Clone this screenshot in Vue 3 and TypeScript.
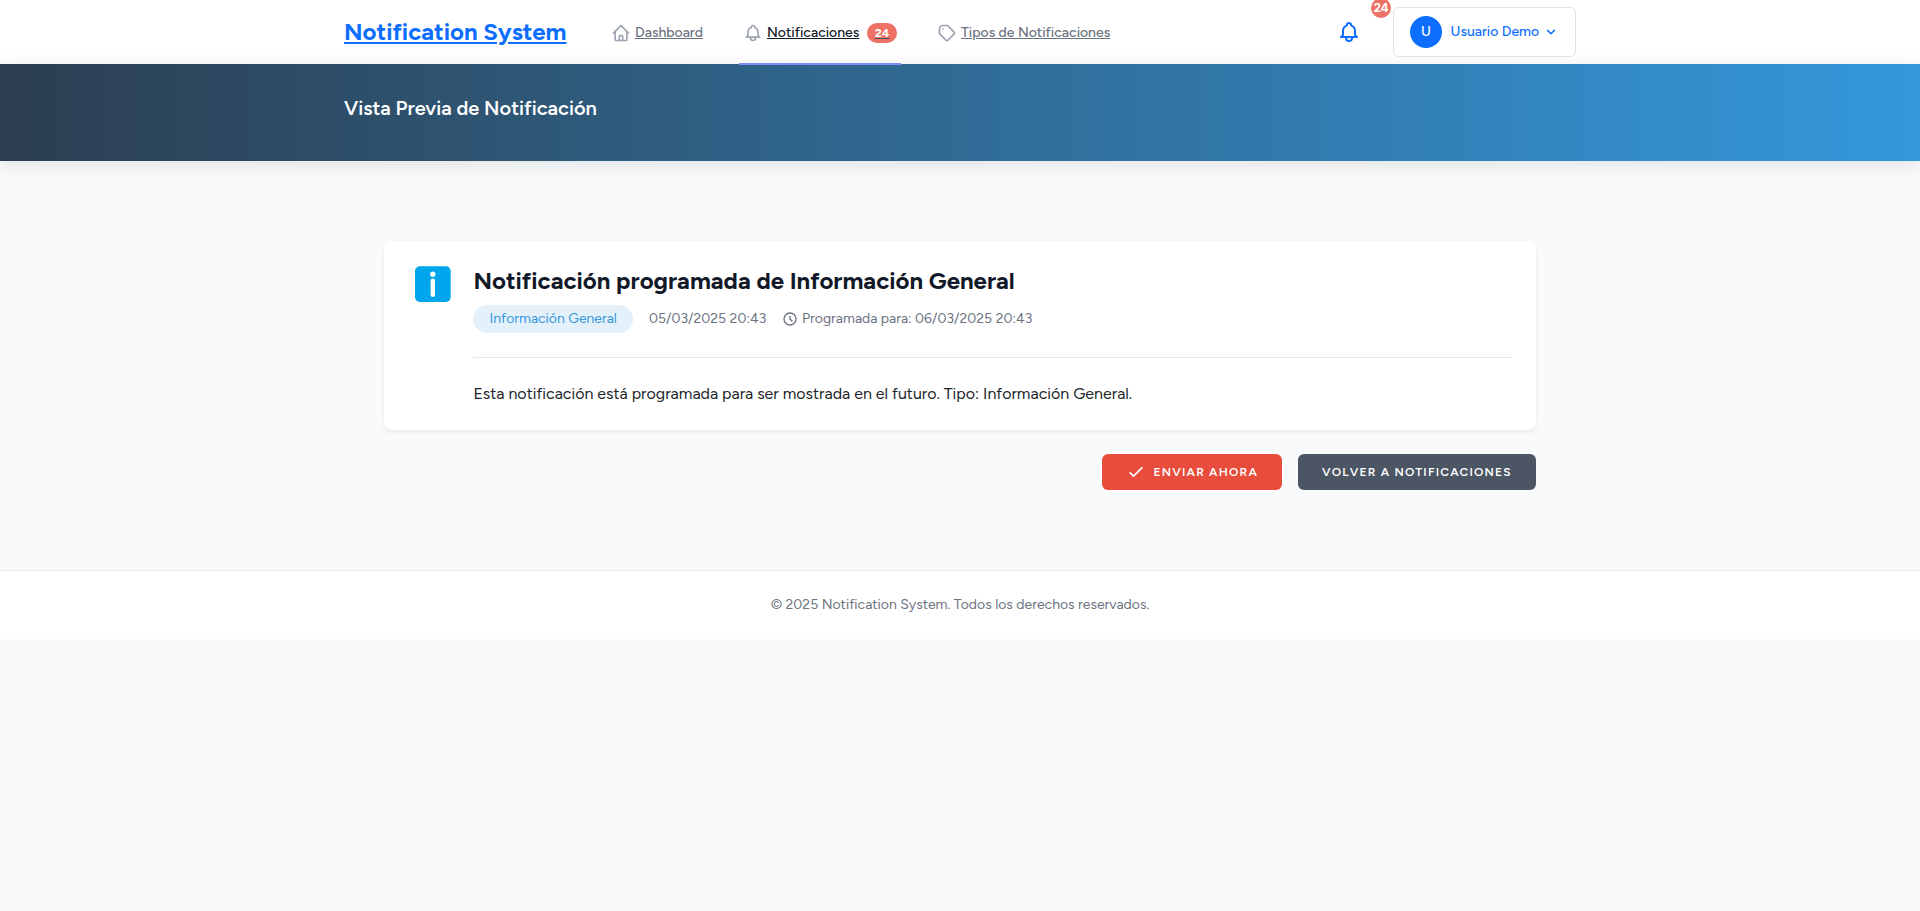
<script setup lang="ts">
interface NavItem { label: string; icon: string; active: boolean; badge: number; cls: string }

const unread = 24
const navItems: NavItem[] = [
  { label: 'Dashboard', cls: 'w-dash', active: false, badge: 0, icon: 'M3 12l2-2m0 0l7-7 7 7M5 10v10a1 1 0 001 1h3m10-11l2 2m-2-2v10a1 1 0 01-1 1h-3m-6 0a1 1 0 001-1v-4a1 1 0 011-1h2a1 1 0 011 1v4a1 1 0 001 1m-6 0h6' },
  { label: 'Notificaciones', cls: 'w-notif', active: true, badge: unread, icon: 'M15 17h5l-1.405-1.405A2.032 2.032 0 0118 14.158V11a6.002 6.002 0 00-4-5.659V5a2 2 0 10-4 0v.341C7.67 6.165 6 8.388 6 11v3.159c0 .538-.214 1.055-.595 1.436L4 17h5m6 0v1a3 3 0 11-6 0v-1m6 0H9' },
  { label: 'Tipos de Notificaciones', cls: 'w-tipos', active: false, badge: 0, icon: 'M7 7h.01M7 3h5c.512 0 1.024.195 1.414.586l7 7a2 2 0 010 2.828l-7 7a2 2 0 01-2.828 0l-7-7A1.994 1.994 0 013 12V7a4 4 0 014-4z' },
]
</script>

<template>
  <div class="page">
    <nav class="navbar">
      <div class="container nav-inner">
        <a class="brand"><span>Notification System</span></a>
        <div class="links">
          <a v-for="item in navItems" :key="item.label" class="link" :class="[item.cls, { active: item.active }]">
            <svg class="link-icon" viewBox="0 0 24 24"><path :d="item.icon" /></svg>
            <span class="link-text">{{ item.label }}</span>
            <span v-if="item.badge" class="pill"><span class="pill-count">{{ item.badge }}</span></span>
          </a>
        </div>
        <div class="right">
          <a class="bell">
            <svg viewBox="0 0 24 24"><path :d="navItems[1].icon" /></svg>
            <span class="bell-badge">{{ unread }}</span>
          </a>
          <button class="user">
            <span class="avatar">U</span>
            <span class="user-name">Usuario Demo</span>
            <svg class="chevron" viewBox="0 0 12 12"><path d="M2.6 4.4L6 7.7L9.4 4.4" /></svg>
          </button>
        </div>
      </div>
    </nav>

    <header class="hero">
      <div class="container"><h2><span>Vista Previa de Notificación</span></h2></div>
    </header>

    <main class="content">
      <article class="card">
        <svg class="info" viewBox="0 0 36 36">
          <rect y="0.3" width="35.7" height="35.7" rx="4.8" fill="#00a6ed" />
          <circle cx="17.8" cy="8.2" r="2.6" fill="#fff" />
          <rect x="15.6" y="12.6" width="4.4" height="18.4" rx="2.2" fill="#fff" />
        </svg>
        <div class="card-body">
          <h1><span>Notificación programada de Información General</span></h1>
          <div class="meta">
            <span class="tag">Información General</span>
            <span class="date">05/03/2025 20:43</span>
            <span class="scheduled">
              <svg viewBox="0 0 24 24"><path d="M12 8v4l3 3m6-3a9 9 0 11-18 0 9 9 0 0118 0z" /></svg>
              <span>Programada para: 06/03/2025 20:43</span>
            </span>
          </div>
          <p class="message"><span>Esta notificación está programada para ser mostrada en el futuro. Tipo: Información General.</span></p>
        </div>
      </article>
      <div class="actions">
        <button class="btn send">
          <svg viewBox="0 0 24 24"><path d="M5 13l4 4L19 7" /></svg>
          <span>ENVIAR AHORA</span>
        </button>
        <button class="btn back"><span>VOLVER A NOTIFICACIONES</span></button>
      </div>
    </main>

    <footer class="footer"><span>© 2025 Notification System. Todos los derechos reservados.</span></footer>
  </div>
</template>

<style>
body { margin: 0; background: #f9fafc; }
</style>

<style scoped>
.page { min-height: 911px; background: #f9fafc; font-family: Figtree, Lato, "Noto Sans", sans-serif; color: #212529; font-size: 14px; line-height: 20px; }
.page * { box-sizing: border-box; }
svg { display: block; flex: none; fill: none; stroke: currentColor; stroke-width: 2; stroke-linecap: round; stroke-linejoin: round; }
span { white-space: nowrap; }
.container { width: 1232px; margin: 0 auto; }
.navbar { height: 64px; background: #fff; }
.nav-inner { height: 64px; display: flex; align-items: center; }
.brand { width: 223px; font-size: 24px; font-weight: 700; line-height: 32px; color: #0d6efd; text-decoration: underline; }
.links { position: relative; z-index: 1; display: flex; gap: 32px; margin-left: 40px; height: 65px; align-self: flex-start; }
.link { display: flex; align-items: center; padding: 2px 4px 0; border-bottom: 2px solid transparent; color: #6b7280; text-decoration: underline; }
.link-icon { width: 20px; height: 20px; margin-right: 4px; color: #9ca3af; }
.link.active { color: #111827; border-bottom-color: #818cf8; }
.w-dash { width: 100px; }
.w-notif { width: 162px; }
.w-tipos { width: 182px; }
.link-text { font-weight: 500; }
.pill { margin-left: auto; width: 30px; height: 20px; border-radius: 10px; background: #ed7164; font-size: 12px; font-weight: 700; text-align: center; text-decoration: underline; text-decoration-color: #4b5563; }
.pill-count { color: #fff; }
.right { margin-left: auto; display: flex; align-items: center; }
.bell { position: relative; width: 24px; height: 24px; margin-right: 32px; color: #0d6efd; }
.bell svg { width: 24px; height: 24px; }
.bell-badge { position: absolute; left: 34px; top: -22px; width: 20px; height: 20px; border-radius: 50%; background: #ed7164; color: #fff; font-family: Inter, sans-serif; font-size: 12px; font-weight: 700; text-align: center; letter-spacing: -0.3px; }
.user { display: flex; align-items: center; width: 183px; height: 50px; padding: 0 16px; border: 1px solid #dee2e6; border-radius: 6px; background: #fff; color: #0d6efd; font: 500 14px/20px Figtree, Lato, sans-serif; }
.avatar { width: 32px; height: 32px; border-radius: 50%; background: #0d6efd; color: #fff; line-height: 32px; margin-right: 8.5px; text-align: center; }
.user-name { width: 89.5px; text-align: left; }
.chevron { width: 12px; height: 12px; margin-left: 5px; stroke-width: 1.5; }
.hero { height: 97px; padding-top: 30px; background: linear-gradient(90deg, #2c3e50, #3498db); box-shadow: 0 4px 20px rgba(0, 0, 0, 0.1); }
.hero h2 { margin: 0; font-size: 20px; line-height: 28px; font-weight: 600; color: #fff; }
.content { width: 1152px; margin: 0 auto; padding: 80px 0; }
.card { display: flex; height: 189px; padding: 24px; background: #fff; border-radius: 8px; box-shadow: 0 2px 5px rgba(0, 0, 0, 0.08); }
.info { width: 36px; height: 36px; margin: 1px 22.4px 0 7px; stroke: none; }
.card-body { flex: 1; }
h1 { margin: 0; font-size: 24px; line-height: 32px; font-weight: 700; color: #111827; }
.meta { display: flex; align-items: center; gap: 16px; height: 28px; margin-top: 8px; color: #6b7280; }
.tag { width: 159.6px; height: 28px; line-height: 28px; border-radius: 14px; background: #e4f1fa; color: #3498db; text-align: center; }
.date { width: 117px; }
.scheduled { display: flex; align-items: center; }
.scheduled svg { width: 16px; height: 16px; margin-right: 4px; }
.message { margin: 24px 0 0; padding-top: 24px; border-top: 1px solid #e5e7eb; font-size: 16px; line-height: 24px; }
.actions { display: flex; justify-content: flex-end; gap: 16px; margin-top: 24px; }
.btn { display: flex; align-items: center; height: 36px; padding: 0 24px; border: 0; border-radius: 6px; color: #fff; font: 600 12px/16px Figtree, Lato, sans-serif; letter-spacing: 1.2px; }
.send { width: 180px; background: #e74c3c; }
.send svg { width: 20px; height: 20px; margin-right: 7.5px; }
.back { width: 238px; background: #4b5563; }
.footer { height: 69px; padding-top: 24px; background: #fff; border-top: 1px solid #e5e7eb; text-align: center; color: #6b7280; }
</style>
